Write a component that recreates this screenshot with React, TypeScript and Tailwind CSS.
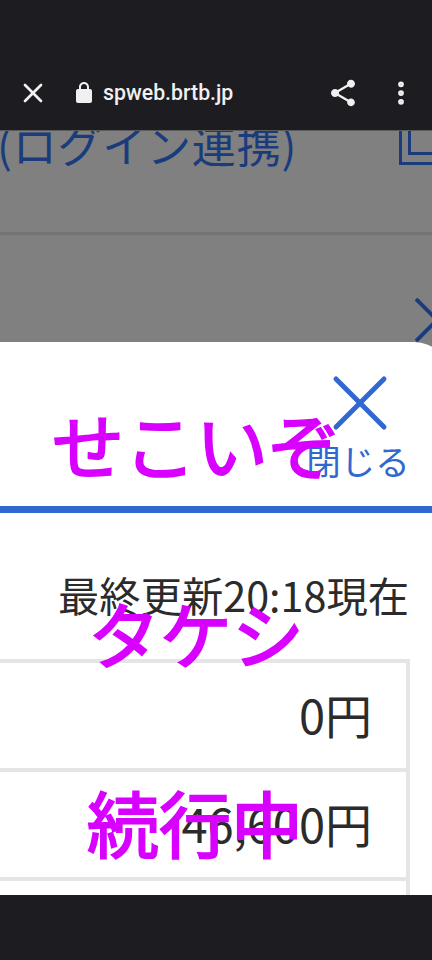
import { X, EllipsisVertical } from 'lucide-react'

const JP = "font-['Noto_Sans_CJK_JP','Noto_Sans_CJK_SC',sans-serif]"
const OVERLAY = 'absolute text-[72px] leading-[86px] text-[#d800ff] whitespace-nowrap [-webkit-text-stroke:2px_#d800ff]'

const ShareIcon = () => (
  <svg width="32" height="32" viewBox="0 0 24 24" fill="currentColor">
    <path d="M18 16.08c-.76 0-1.44.3-1.96.77L8.91 12.7c.05-.23.09-.46.09-.7s-.04-.47-.09-.7l7.05-4.11c.54.5 1.25.81 2.04.81 1.66 0 3-1.34 3-3s-1.34-3-3-3-3 1.34-3 3c0 .24.04.47.09.7L8.04 9.81C7.5 9.31 6.79 9 6 9c-1.66 0-3 1.34-3 3s1.34 3 3 3c.79 0 1.5-.31 2.04-.81l7.12 4.16c-.05.21-.08.43-.08.65 0 1.61 1.31 2.92 2.92 2.92s2.92-1.31 2.92-2.92-1.31-2.92-2.92-2.92z" />
  </svg>
)

const LockIcon = () => (
  <svg width="24" height="24" viewBox="0 0 24 24" fill="currentColor">
    <path d="M18 8h-1V6c0-2.76-2.24-5-5-5S7 3.24 7 6v2H6c-1.1 0-2 .9-2 2v10c0 1.1.9 2 2 2h12c1.1 0 2-.9 2-2V10c0-1.1-.9-2-2-2zM9 6c0-1.66 1.34-3 3-3s3 1.34 3 3v2H9V6z" />
  </svg>
)

const CopyIcon = () => (
  <svg width="34" height="34" viewBox="0 0 34 34" fill="none" stroke="#1a3c7c" strokeWidth="3">
    <path d="M2.5 0V32.5H34" />
    <path d="M11.5 0V22.5H34" />
  </svg>
)

const AmountRow = ({ amount }: { amount: string }) => (
  <div className="h-[109px] shrink-0 border-b-[4px] border-[#e5e5e5] flex items-start justify-end pr-[34px] pt-[20px] text-[47px] leading-[62px] text-[#2b2b2b]">
    {amount}
  </div>
)

export default function App() {
  return (
    <div className={`relative w-[432px] h-[960px] overflow-hidden bg-[#808080] flex flex-col ${JP}`}>
      {/* ブラウザのツールバー */}
      <header className="h-[131px] shrink-0 bg-[#1c1c21] border-b border-[#5c5c5c] flex items-center pt-[55px] text-[#f0f0f0]">
        <X size={32} strokeWidth={2} className="ml-[17px]" />
        <span className="ml-[23px]"><LockIcon /></span>
        <span className="ml-[7px] font-['Roboto',sans-serif] font-medium text-[21.3px] leading-[28px]">spweb.brtb.jp</span>
        <span className="ml-auto"><ShareIcon /></span>
        <EllipsisVertical size={30} strokeWidth={2.6} className="ml-[27px] mr-[16px]" />
      </header>

      {/* 背面のページ */}
      <section className="h-[211px] shrink-0 overflow-hidden text-[#1a3c7c]">
        <div className="flex items-start h-[104px] border-b-[3px] border-[#737373]">
          <span className="ml-[-3px] mt-[-17px] text-[44px] leading-[60px] whitespace-nowrap tracking-[0.8px]">(ログイン連携)</span>
          <span className="ml-auto"><CopyIcon /></span>
        </div>
        <div className="flex justify-end mt-[63px]">
          <svg width="17" height="44" viewBox="0 0 17 44" fill="none" stroke="#1a3c7c" strokeWidth="4">
            <path d="M1 1L22 22L1 43" />
          </svg>
        </div>
      </section>

      {/* モーダル（右端は画面の外まで続く） */}
      <main className="flex-1 min-h-0 mr-[-18px] bg-white rounded-tr-[36px] overflow-hidden flex flex-col">
        <div className="h-[171px] shrink-0 border-b-[7px] border-[#3068d0] flex flex-col items-end pr-[42px] text-[#3068d0]">
          <div className="w-[100px] flex flex-col items-center">
            <X size={96} strokeWidth={1.25} className="mt-[13px] ml-[3px]" />
            <span className="text-[34.5px] leading-[42px] mt-[-12px] whitespace-nowrap">閉じる</span>
          </div>
        </div>
        <p className="mt-[52px] pr-[41px] text-right text-[41.3px] leading-[58px] text-[#2b2b2b]">最終更新20:18現在</p>
        <div className="mt-[36px] mr-[40px] border-t-[4px] border-r-[4px] border-[#e5e5e5] flex flex-col">
          <AmountRow amount="0円" />
          <AmountRow amount="46,600円" />
          <div className="h-[60px]" />
        </div>
      </main>

      <footer className="h-[65px] shrink-0 bg-[#1c1c21]" />

      {/* 上に重ねた文字 */}
      <span className={`${OVERLAY} left-[52px] top-[400px]`}>せこいぞ</span>
      <span className={`${OVERLAY} left-[88px] top-[589px]`}>タケシ</span>
      <span className={`${OVERLAY} left-[87px] top-[778px]`}>続行中</span>
    </div>
  )
}
